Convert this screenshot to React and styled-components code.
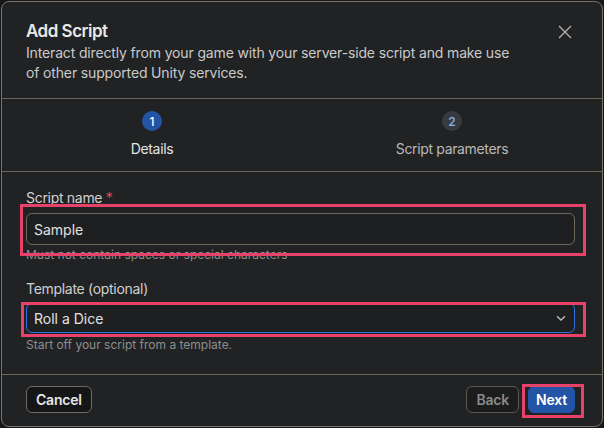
import React from "react";
import styled, { createGlobalStyle } from "styled-components";

const GlobalStyle = createGlobalStyle`
  html, body {
    margin: 0;
    padding: 0;
    background: #161719;
    font-family: Inter, "Noto Sans", sans-serif;
  }
  * {
    box-sizing: border-box;
  }
`;

const Dialog = styled.div`
  margin: 1px 0 0 1px;
  width: 602px;
  height: 426px;
  background: #212224;
  border: 1px solid #7a7264;
  border-radius: 8px;
  display: flex;
  flex-direction: column;
  overflow: hidden;
`;

const Header = styled.header`
  display: flex;
  justify-content: space-between;
  align-items: flex-start;
  padding: 17px 30px 15px 24px;
  border-bottom: 1px solid #6b655b;
`;

const Title = styled.h2`
  margin: 0;
  font-size: 17px;
  line-height: 24px;
  font-weight: 600;
  letter-spacing: -0.5px;
  color: #e8e8e8;
`;

const Description = styled.p`
  margin: 0;
  max-width: 500px;
  font-size: 14px;
  line-height: 20px;
  letter-spacing: -0.15px;
  color: #cacaca;
`;

const CloseButton = styled.button`
  margin-top: 6px;
  padding: 0;
  border: 0;
  background: none;
  width: 14px;
  height: 14px;
  display: flex;
  cursor: pointer;
`;

const Stepper = styled.div`
  display: flex;
  border-bottom: 1px solid #6b655b;
  padding: 12px 0 12px;
`;

const Step = styled.div`
  flex: 1;
  display: flex;
  flex-direction: column;
  align-items: center;
  gap: 8px;
`;

const StepNumber = styled.span`
  width: 20px;
  height: 20px;
  border-radius: 50%;
  display: flex;
  align-items: center;
  justify-content: center;
  font-size: 12px;
  font-weight: 500;
  background: ${(p) => (p.$active ? "#2354a6" : "#373a3f")};
  color: ${(p) => (p.$active ? "#ffffff" : "#8db6ef")};
`;

const StepLabel = styled.span`
  font-size: 14px;
  line-height: 20px;
  letter-spacing: -0.35px;
  color: ${(p) => (p.$active ? "#e4e4e4" : "#b9b9b9")};
`;

const Form = styled.div`
  flex: 1;
  padding: 16px 27px 0 24px;
  display: flex;
  flex-direction: column;
`;

const Field = styled.div`
  display: flex;
  flex-direction: column;
  margin-bottom: ${(p) => p.$spacing || 0}px;
`;

const Label = styled.label`
  font-size: 14px;
  line-height: 20px;
  letter-spacing: -0.3px;
  color: #d0d0d0;
  margin-bottom: ${(p) => p.$gap}px;
`;

const Required = styled.span`
  color: #e5484d;
`;

const Control = styled.div`
  position: relative;
`;

const TextInput = styled.div`
  height: ${(p) => p.$height}px;
  border: 1px solid ${(p) => (p.$focused ? "#2f6fe0" : "#6e685c")};
  border-radius: 6px;
  background: #1e1f21;
  display: flex;
  align-items: center;
  justify-content: space-between;
  padding: 0 7px 0 7px;
  font-size: 14px;
  color: #e2e2e2;
`;

const Highlight = styled.div`
  position: absolute;
  top: ${(p) => p.$t}px;
  left: ${(p) => p.$l}px;
  right: ${(p) => p.$r}px;
  bottom: ${(p) => p.$b}px;
  border: 3px solid #e8416a;
  pointer-events: none;
`;

const Help = styled.span`
  font-size: 12px;
  line-height: 16px;
  color: #8e8e8e;
  margin-top: ${(p) => p.$gap}px;
`;

const Footer = styled.footer`
  border-top: 1px solid #6b655b;
  height: 52px;
  padding: 11px 27px 0 24px;
  display: flex;
  align-items: flex-start;
  justify-content: space-between;
`;

const Actions = styled.div`
  display: flex;
  gap: 9px;
  align-items: center;
`;

const Button = styled.button`
  height: 27px;
  padding: 0 ${(p) => p.$px}px;
  border-radius: 6px;
  font-family: inherit;
  font-size: 14px;
  font-weight: 600;
  letter-spacing: -0.2px;
  cursor: pointer;
  border: 1px solid ${(p) => p.$border};
  background: ${(p) => p.$bg};
  color: ${(p) => p.$color};
`;

const Anchor = styled.div`
  position: relative;
  display: flex;
`;

const Chevron = () => (
  <svg width="12" height="12" viewBox="0 0 12 12">
    <path d="M2 4.2 L6 8 L10 4.2" fill="none" stroke="#bdbdbd" strokeWidth="1.3" />
  </svg>
);

const CloseIcon = () => (
  <svg width="14" height="14" viewBox="0 0 14 14">
    <path d="M1 1 L13 13 M13 1 L1 13" stroke="#b3b0aa" strokeWidth="1.4" />
  </svg>
);

const App = () => {
  return (
    <>
      <GlobalStyle />
      <Dialog>
        <Header>
          <div>
            <Title>Add Script</Title>
            <Description>
              Interact directly from your game with your server-side script and
              make use of other supported Unity services.
            </Description>
          </div>
          <CloseButton aria-label="Close">
            <CloseIcon />
          </CloseButton>
        </Header>

        <Stepper>
          <Step>
            <StepNumber $active>1</StepNumber>
            <StepLabel $active>Details</StepLabel>
          </Step>
          <Step>
            <StepNumber>2</StepNumber>
            <StepLabel>Script parameters</StepLabel>
          </Step>
        </Stepper>

        <Form>
          <Field $spacing={16}>
            <Label $gap={5}>
              Script name <Required>*</Required>
            </Label>
            <Control>
              <TextInput $height={32}>Sample</TextInput>
              <Highlight $t={-9} $l={-6} $r={-11} $b={-11} />
            </Control>
            <Help $gap={2}>Must not contain spaces or special characters</Help>
          </Field>
          <Field>
            <Label $gap={4}>Template (optional)</Label>
            <Control>
              <TextInput $height={30} $focused>
                Roll a Dice
                <Chevron />
              </TextInput>
              <Highlight $t={-1} $l={-5} $r={-11} $b={-4} />
            </Control>
            <Help $gap={4}>Start off your script from a template.</Help>
          </Field>
        </Form>

        <Footer>
          <Button $px={9} $border="#6f6a60" $bg="#151618" $color="#e6e6e6">
            Cancel
          </Button>
          <Actions>
            <Button $px={9} $border="#5c5850" $bg="#1b1c1e" $color="#8a8a8a">
              Back
            </Button>
            <Anchor>
              <Button $px={7} $border="#2354a6" $bg="#2354a6" $color="#ffffff">
                Next
              </Button>
              <Highlight $t={-2} $l={-6} $r={-9} $b={-5} />
            </Anchor>
          </Actions>
        </Footer>
      </Dialog>
    </>
  );
};

export default App;
